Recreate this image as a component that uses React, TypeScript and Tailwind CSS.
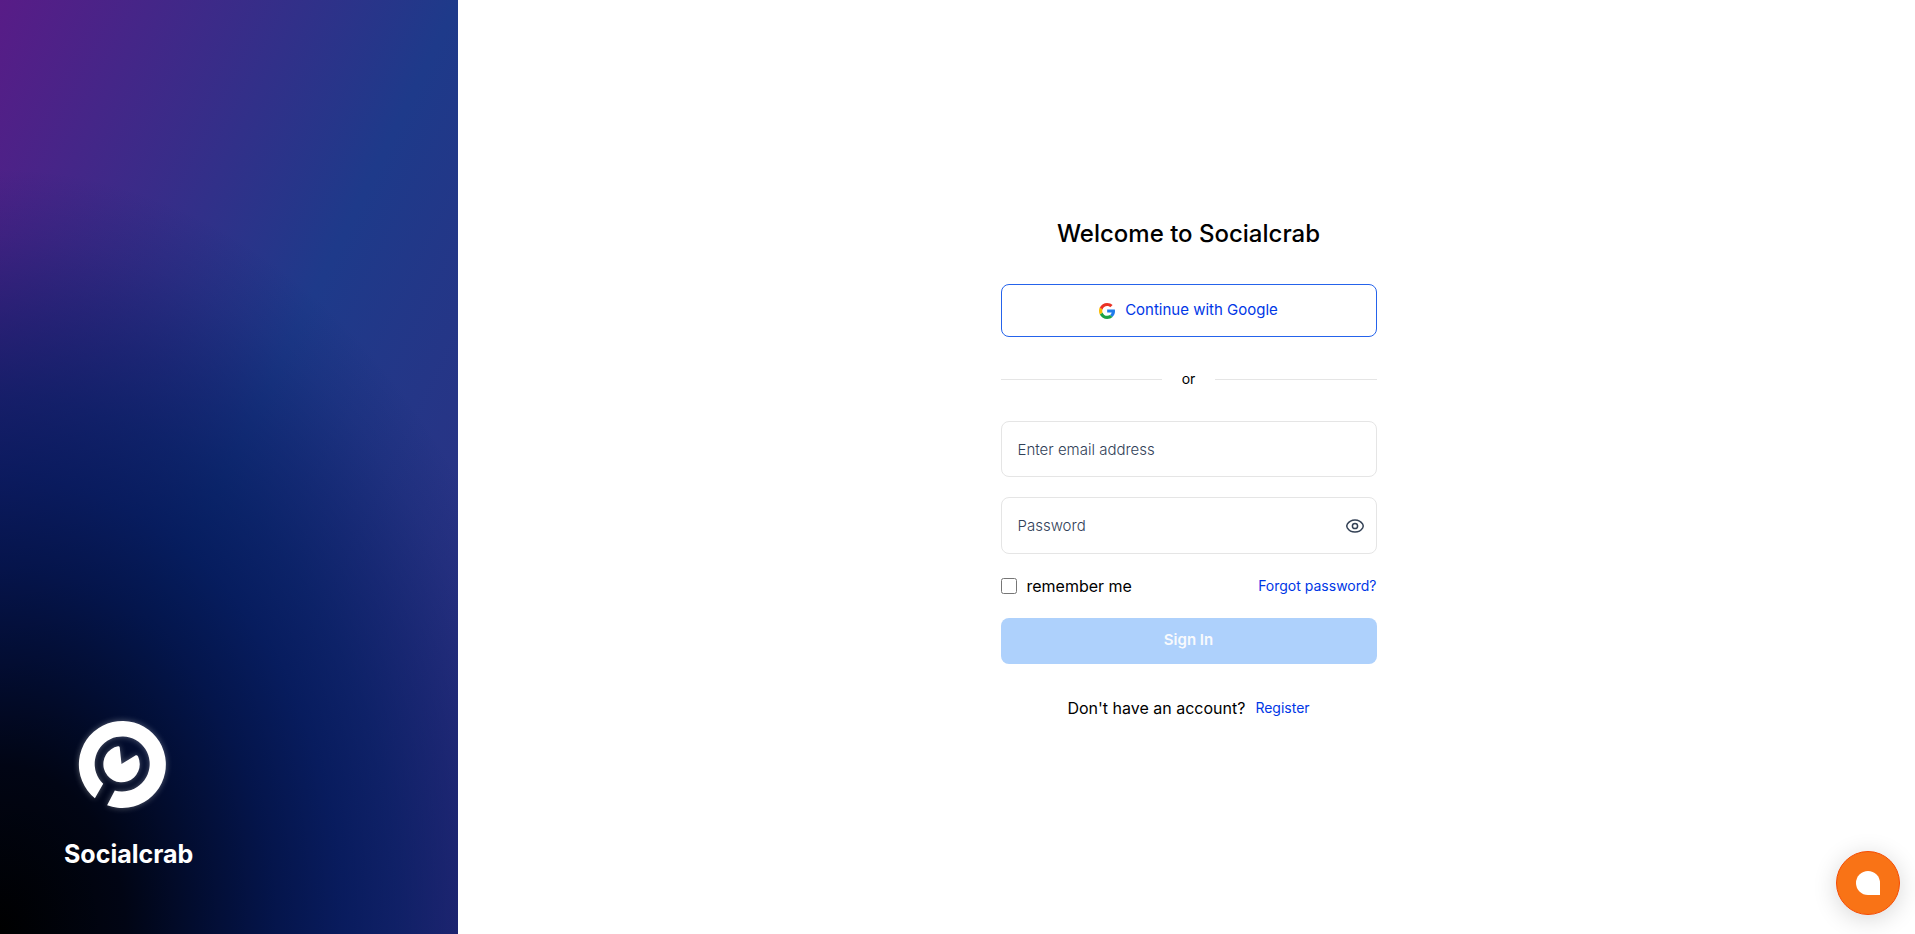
import { useState } from "react";

function BrandMark() {
  return (
    <svg
      viewBox="0 0 100 100"
      className="size-[100px] overflow-visible drop-shadow-[0_0_3px_rgba(255,255,255,0.35)]"
      aria-hidden="true"
    >
      <path
        fill="#fff"
        d="M22.9 84.2 A43.5 43.5 0 1 1 35.1 91.2 L42.8 76.4 A27.5 27.5 0 1 0 31.2 69.8 Z"
      />
      <path fill="#fff" d="M49.5 50 L47.7 33.2 Q47.4 32 46 32.3 A18.2 18.2 0 1 0 66.2 42.8 Q65.6 40.6 63.8 41.3 Z" />
    </svg>
  );
}

function GoogleIcon() {
  return (
    <svg viewBox="0 0 24 24" className="size-4" aria-hidden="true">
      <path fill="#1F7CEB" d="M24 12.27c0-.98-.08-1.7-.26-2.46H12.24v4.45h6.74c-.14 1.11-.87 2.78-2.5 3.9l3.62 2.83C22.56 18.8 24 15.82 24 12.27Z" />
      <path fill="#1BA345" d="M12.24 24c3.31 0 6.08-1.09 8.1-2.96l-3.86-2.99c-1.03.72-2.42 1.22-4.24 1.22-3.24 0-5.99-2.13-6.97-5.08l-4.01 3.1C3.27 21.27 7.42 24 12.24 24Z" />
      <path fill="#FBBC05" d="M5.27 14.19A7.4 7.4 0 0 1 4.86 11.82c0-.83.15-1.63.4-2.37l-4.06-3.2A12 12 0 0 0 0 11.82c0 2.03.46 3.94 1.27 5.45Z" />
      <path fill="#EB3326" d="M12.24 4.64c2.3 0 3.85 1 4.74 1.83l3.46-3.38C18.31 1.12 15.55 0 12.24 0 7.42 0 3.27 2.73 1.27 6.7l3.98 3.1c1-2.96 3.75-5.16 6.99-5.16Z" />
    </svg>
  );
}

function EyeIcon() {
  return (
    <svg viewBox="0 0 20 20" className="size-5" fill="none" stroke="#334155" strokeWidth="1.5" aria-hidden="true">
      <path d="M10 3.9C6.4 3.9 3.8 5.7 2.3 8.1C1.6 9.3 1.6 10.7 2.3 11.9C3.8 14.3 6.4 16.1 10 16.1C13.6 16.1 16.2 14.3 17.7 11.9C18.4 10.7 18.4 9.3 17.7 8.1C16.2 5.7 13.6 3.9 10 3.9Z" />
      <circle cx="10" cy="10" r="2.6" />
    </svg>
  );
}

const fieldClass =
  "w-full rounded-lg border border-neutral-200 bg-white pl-4 text-[15px] leading-6 font-light text-black outline-none placeholder:text-slate-700";

export default function App() {
  const [visible, setVisible] = useState(false);

  return (
    <div className="flex min-h-screen bg-white font-['Inter',sans-serif] text-black">
      <aside className="flex w-[458px] shrink-0 flex-col items-start justify-end bg-[radial-gradient(ellipse_125%_82%_at_0%_100%,#000_0%,rgba(0,4,18,0.98)_22%,rgba(0,11,46,0.94)_36%,rgba(0,17,68,0.89)_48%,rgba(0,22,84,0.8)_60%,rgba(0,24,88,0.65)_70%,rgba(0,22,88,0.42)_80%,rgba(0,22,88,0.16)_91%,rgba(0,22,88,0)_100%),linear-gradient(to_bottom_right,#581c87,#1e3a8a_50%,#312e81)] px-16 pb-16">
        <div className="mb-6 pl-2">
          <BrandMark />
        </div>
        <p className="text-[25px] leading-8 font-bold text-white">Socialcrab</p>
      </aside>

      <main className="flex flex-1 items-center justify-center pl-1">
        <form className="flex w-[376px] flex-col pt-1" onSubmit={(e) => e.preventDefault()}>
          <h1 className="mb-[34px] text-center text-2xl leading-8 font-medium">Welcome to Socialcrab</h1>

          <button
            type="button"
            className="flex h-[53px] items-center justify-center gap-[10px] rounded-lg border border-[#2563eb] text-[15px] text-[#0037e6]"
          >
            <GoogleIcon />
            Continue with Google
          </button>

          <div className="my-8 flex items-center gap-5 text-sm leading-5">
            <span className="h-px flex-1 bg-neutral-200" />
            or
            <span className="h-px flex-1 bg-neutral-200" />
          </div>

          <input type="email" aria-label="Email address" placeholder="Enter email address" className={`${fieldClass} h-14 pr-4`} />

          <div className="relative mt-5">
            <input
              type={visible ? "text" : "password"}
              aria-label="Password"
              placeholder="Password"
              className={`${fieldClass} block h-[57px] pr-12`}
            />
            <button
              type="button"
              aria-label="Show password"
              onClick={() => setVisible(!visible)}
              className="absolute inset-y-0 right-3 flex items-center"
            >
              <EyeIcon />
            </button>
          </div>

          <div className="mt-5 flex h-6 items-center justify-between">
            <label className="flex items-center gap-[10px] text-base">
              <input type="checkbox" className="size-4" />
              remember me
            </label>
            <a href="#forgot" className="text-sm text-[#0037e6]">
              Forgot password?
            </a>
          </div>

          <button type="submit" disabled className="mt-5 h-[46px] rounded-lg bg-[#aed1fc] pb-[2px] text-[15px] font-semibold text-slate-50">
            Sign In
          </button>

          <p className="mt-8 flex items-center justify-center gap-[10px] text-base">
            Don't have an account?
            <a href="#register" className="text-sm text-[#0037e6]">
              Register
            </a>
          </p>
        </form>
      </main>

      <button
        type="button"
        aria-label="Open chat"
        className="fixed right-[15px] bottom-[19px] flex size-16 items-center justify-center rounded-full border border-orange-600 bg-[#f97316] shadow-[0_4px_24px_rgba(0,0,0,0.16)]"
      >
        <span className="size-6 rounded-full rounded-br-none bg-white" />
      </button>
    </div>
  );
}
